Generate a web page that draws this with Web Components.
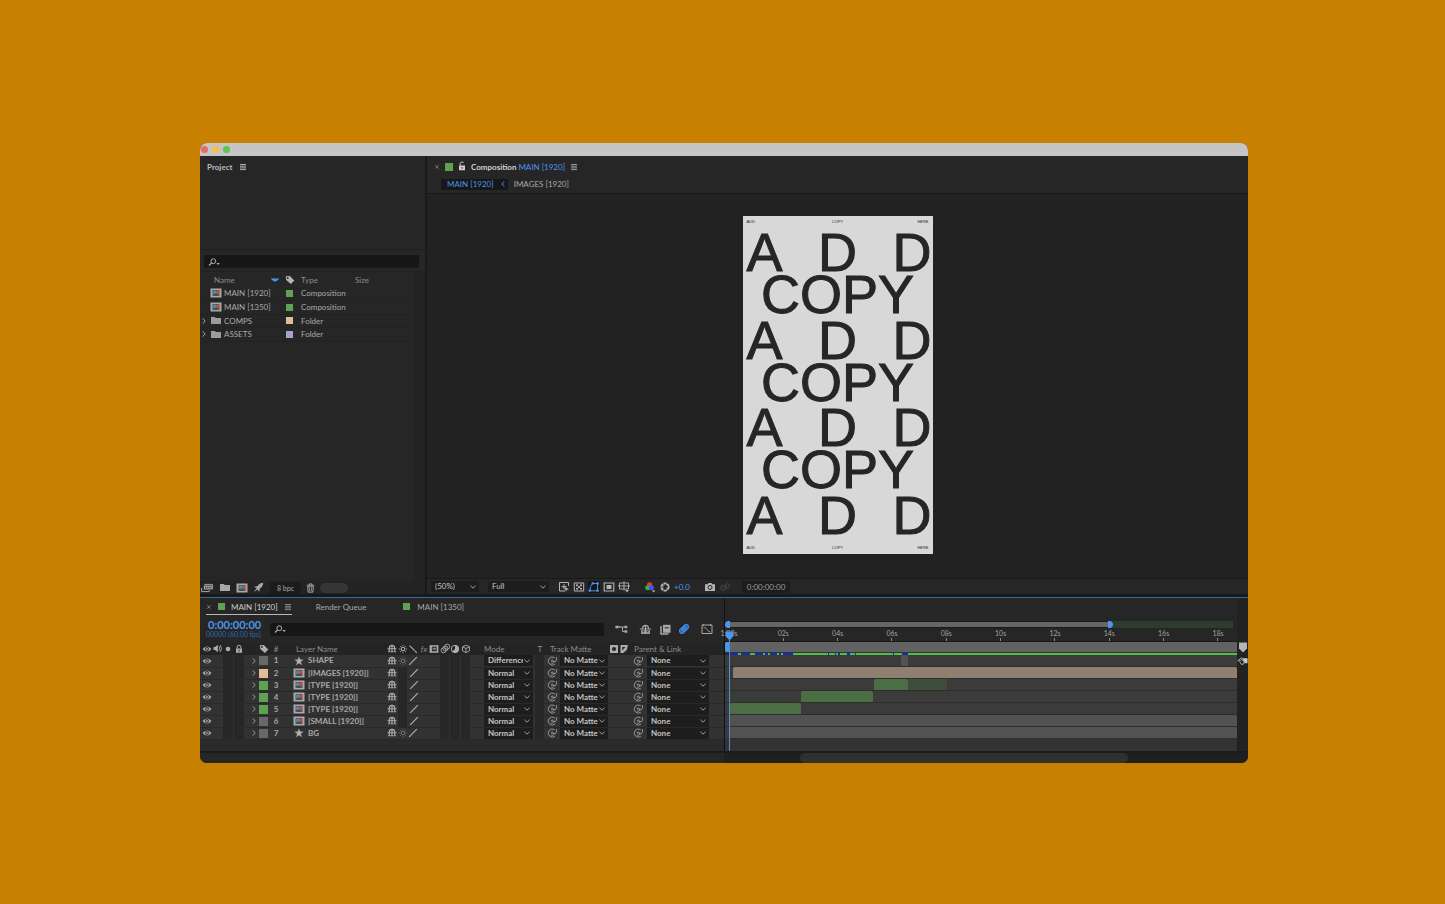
<!DOCTYPE html>
<html lang="en">
<head>
<meta charset="utf-8">
<title>MAIN [1920]</title>
<style>
  * { box-sizing: border-box; }
  body {
    margin: 0;
    min-height: 100vh;
    padding: 143px 197px 141px 200px;
    display: flex;
    background: #c88000;
    font: 8px/12px Lato, "Open Sans", sans-serif;
    color: #a8a8a8;
    --panel: #262626;
    --line: #191919;
    --field: #171717;
    --blue: #4b96ee;
    --green: #5fa252;
    --peach: #e3bd98;
    --violet: #a6a5c9;
    --gray: #686868;
  }
</style>
</head>
<body>
<app-window>
  <project-panel slot="left"></project-panel>
  <comp-panel slot="right"></comp-panel>
  <timeline-panel slot="bottom"></timeline-panel>
</app-window>

<script>
// each entry: [viewBox width, viewBox height, markup]
const ICONS = {
  menu: [8, 8, `<path d="M1 1.5h6M1 3.2h6M1 4.9h6M1 6.6h6" stroke="currentColor" stroke-width=".9"/>`],
  close: [6, 6, `<path d="M1.2 1.2l3.4 3.4M4.6 1.2L1.2 4.6" stroke="currentColor" stroke-width=".8"/>`],
  unlock: [8, 10, `<path d="M1 4.5h6v4.7H1z" fill="currentColor"/><path d="M2.2 4.5V2.6a1.8 1.8 0 0 1 3.4-.6" fill="none" stroke="currentColor"/><path d="M4 6v1.8" stroke="#262626"/>`],
  lock: [8, 10, `<path d="M1 4.5h6v4.3H1z" fill="currentColor"/><path d="M2.2 4.5V3a1.8 1.8 0 0 1 3.6 0v1.5" fill="none" stroke="currentColor"/><path d="M4 5.7v1.8" stroke="#262626"/>`],
  search: [12, 8, `<circle cx="5.3" cy="3.2" r="2.4" fill="none" stroke="currentColor"/><path d="M3.6 4.9L1 7.5" stroke="currentColor" stroke-width="1.2"/><path d="M8.4 5h3.4L10.1 6.9z" fill="currentColor"/>`],
  tag: [10, 10, `<path d="M.8 1.2L4.8.9 9.3 5.4 5.9 9.1 1.2 5z" fill="currentColor"/><circle cx="2.8" cy="3" r=".9" fill="#262626"/>`],
  comp: [12, 10, `<path d="M.5.5h11v9H.5z" fill="#a9a9a9"/><path d="M2.500 2h7v6h-7z" fill="#55555a"/><circle cx="4.800" cy="4.200" r="1.800" fill="#4a86d8"/><circle cx="7.700" cy="4.300" r="1.700" fill="#d8483c"/><path d="M4.500 5.800h2.800V8H4.500z" fill="#2f5f3a"/>`],
  folder: [12, 9, `<path d="M1 1h3.8l1 1.1H11V8H1z" fill="currentColor"/>`],
  chev: [6, 8, `<path d="M1.7 1.4L4.2 4 1.7 6.6" fill="none" stroke="currentColor"/>`],
  back: [6, 8, `<path d="M4.2 1.4L1.9 4l2.3 2.6" fill="none" stroke="currentColor"/>`],
  down: [8, 6, `<path d="M1.4 1.7L4 4.2l2.6-2.5" fill="none" stroke="currentColor"/>`],
  sort: [10, 6, `<path d="M.6 1.4h8.8L7.4 3.4Q5 5.4 2.6 3.4z" fill="currentColor"/>`],
  interpret: [13, 10, `<path d="M3.4 1.4h8.2v4.8" fill="none" stroke="currentColor" stroke-width=".9"/><path d="M2.8 2.6h8v4h-8z" fill="currentColor"/><path d="M4 3.8h1.2v1.6H4zM6.2 3.8h1.2v1.6H6.2zM8.4 3.8h1.2v1.6H8.4z" fill="#333"/><path d="M.6 5v3.6h7.6V7.2" fill="none" stroke="currentColor"/>`],
  rocket: [11, 11, `<path d="M10.2.8Q6.4 1 4.3 4.2L1 4.8l2.600 1.4L.8 9.9l3.9-2.5L6.2 10l.6-3.3Q10 4.600 10.200.8z" fill="currentColor"/>`],
  trash: [9, 10, `<path d="M.8 2.2h7.4M3.2 2V.9h2.600V2" fill="none" stroke="currentColor" stroke-width=".9"/><path d="M1.7 3.2h5.600l-.4 5.9H2.1z" fill="none" stroke="currentColor"/><path d="M3.600 4.200v3.800M5.400 4.200v3.800" stroke="currentColor" stroke-width=".8"/>`],
  roi: [12, 12, `<path d="M10.500 5V1.500h-9v8.500H7" fill="none" stroke="currentColor"/><path d="M6 3.200v5M3.500 5.700h5" stroke="currentColor"/><path d="M6.500 5.700l4.500 2.500-2.200.6-1 2z" fill="currentColor"/>`],
  checker: [12, 12, `<path d="M1.300 2h9.400v8H1.300z" fill="none" stroke="currentColor"/><path d="M3 3.500h2v1.700H3zM7 3.500h2v1.700H7zM5 5.200h2v1.700H5zM3 6.900h2v1.700H3zM7 6.900h2v1.700H7z" fill="currentColor"/>`],
  mask: [12, 12, `<path d="M1.800 9.800Q2 4.600 4.600 2.500h5v7.300z" fill="none" stroke="currentColor"/><path d="M.6 8.600h2.200v2.200H.6zM3.600 1.300h2.200v2.200H3.600zM8.600 1.300h2.200v2.200H8.600zM8.600 8.600h2.200v2.200H8.600z" fill="currentColor"/>`],
  safe: [12, 12, `<path d="M1.200 2h9.600v8H1.200z" fill="none" stroke="currentColor" stroke-width="1.100"/><path d="M3.500 4h5v4h-5z" fill="currentColor"/>`],
  guides: [12, 12, `<path d="M1.500 2h9v6h-9zM0 5h12M6 .5v9" fill="none" stroke="currentColor" stroke-width=".9"/><path d="M7 9h4L9 11.300z" fill="currentColor"/>`],
  rgb: [12, 12, `<circle cx="5.600" cy="3.800" r="2.600" fill="#e8392c"/><circle cx="3.700" cy="6.700" r="2.500" fill="#38b13f"/><circle cx="7.400" cy="6.800" r="2.500" fill="#4058ee"/><path d="M7.800 9.400h3.600l-1.800 2z" fill="#bbb"/>`],
  aperture: [12, 12, `<circle cx="6" cy="6" r="3.700" fill="none" stroke="currentColor" stroke-width="1.800" stroke-dasharray="3.200 .67"/><path d="M6 1.800l2.600 3M10.200 6L7 8M3.800 9.400L3.900 5.500M2 5l3.500-1" stroke="currentColor" stroke-width=".8"/>`],
  camera: [12, 10, `<path d="M1 2.300h2.600L4.600 1h2.800l1 1.300H11V9H1z" fill="currentColor"/><circle cx="6" cy="5.400" r="2" fill="none" stroke="#262626"/>`],
  show: [12, 10, `<circle cx="4" cy="6" r="2.300" fill="none" stroke="currentColor"/><path d="M6 3.500L8.500 1.500 11 3.700 8 6.500z" fill="none" stroke="currentColor"/>`],
  eye: [10, 8, `<path d="M.5 4Q5-1.200 9.500 4 5 9.200.5 4z" fill="currentColor"/><circle cx="5" cy="4" r="1.900" fill="#262626"/><circle cx="5" cy="4" r=".9" fill="currentColor"/>`],
  speaker: [10, 9, `<path d="M.5 3h1.600L4.800.7v7.600L2.100 6H.5z" fill="currentColor"/><path d="M6 2.400q1.300 2.100 0 4.200M7.200 1q2.600 3.500 0 7" fill="none" stroke="currentColor" stroke-width=".9"/>`],
  dot: [6, 6, `<circle cx="3" cy="3" r="2.300" fill="currentColor"/>`],
  star: [10, 10, `<path d="M5 .4l1.200 3.200 3.500.1-2.800 2.100 1 3.400L5 7.200 2.100 9.200l1-3.400L.3 3.700l3.500-.1z" fill="currentColor"/>`],
  shy: [10, 9, `<path d="M2.200 4.500a2.800 3.100 0 0 1 5.600 0M.5 4.700h9M5 1.500v6M2.300 4.700v3H1M7.700 4.700v3h1.500M3.500 7.800h3" fill="none" stroke="currentColor" stroke-width="1.100"/>`],
  sun: [10, 10, `<circle cx="5" cy="5" r="1.800" fill="none" stroke="currentColor" stroke-width="1.100"/><path d="M5 .9v1.300M5 7.800v1.300M.9 5h1.300M7.800 5h1.300M2.100 2.100l.8.8M7.100 7.100l.8.8M7.900 2.100l-.8.8M2.900 7.100l-.8.8" stroke="currentColor" stroke-width=".9"/>`],
  slash: [10, 10, `<path d="M1.200 8.800l7.600-7.600" stroke="currentColor" stroke-width="1.200"/>`],
  backslash: [10, 10, `<path d="M1.600 1.600l5 5M7 7l1.800 1.800" stroke="currentColor" stroke-width="1.200"/>`],
  film: [10, 10, `<path d="M.6 1.200h8.800v7.600H.6z" fill="currentColor"/><path d="M2.800 2.600h5v4.800h-5z" fill="#383838"/><path d="M3.800 4.800h3.200" stroke="currentColor"/>`],
  blur: [11, 11, `<g fill="none" stroke="currentColor" stroke-width=".9"><circle cx="7.300" cy="3.700" r="2.500"/><circle cx="5.400" cy="5.500" r="2.500"/><circle cx="3.500" cy="7.300" r="2.500"/></g>`],
  blurOn: [12, 12, `<path d="M6.300 1.800L2 6a2.700 2.700 0 0 0 3.900 3.900l4.300-4.200A2.700 2.700 0 0 0 6.300 1.800z" fill="#2d66b5"/><g fill="none" stroke="currentColor" stroke-width=".8"><circle cx="8.100" cy="3.900" r="2.600"/><circle cx="6.100" cy="5.900" r="2.600"/><circle cx="4" cy="7.900" r="2.600"/></g>`],
  adjust: [10, 10, `<circle cx="5" cy="5" r="3.700" fill="none" stroke="currentColor"/><path d="M2.400 7.600A3.700 3.700 0 0 0 7.600 2.400z" fill="currentColor"/><path d="M5 1.300a3.700 3.700 0 0 1 0 7.400z" fill="currentColor"/>`],
  cube: [10, 10, `<path d="M5 1.200l3.500 1.600v4L5 8.700 1.500 6.800v-4zM1.500 2.800L5 4.500l3.500-1.700M5 4.500v4" fill="none" stroke="currentColor" stroke-width=".9"/>`],
  whip: [11, 10, `<path d="M5.600 5.300a.7.700 0 1 1-.5-1.200 1.600 1.600 0 1 1-1 2.700M6.700 5.500a2 2 0 0 0 2.700-1.200V1.200M7.600 1.800A4 4 0 1 0 8 8" fill="none" stroke="currentColor" stroke-width=".8"/>`],
  matteA: [10, 10, `<path d="M1 1h8v8H1z" fill="currentColor"/><circle cx="5" cy="5" r="2.100" fill="#262626"/>`],
  matteB: [10, 10, `<path d="M1.500 1h7.500L7.800 6 4 9H1.500z" fill="currentColor"/><path d="M3.300 3h3.200L3.300 6.500z" fill="#262626"/>`],
  flow: [13, 10, `<path d="M.5 3h5M4 3h8M7.500 3v4.500H12" fill="none" stroke="currentColor"/><path d="M.5 1.800h3v2.400h-3zM9.500 1.800h2.800v2.400H9.500zM9.500 6.300h2.800v2.400H9.500z" fill="currentColor"/>`],
  shyBig: [13, 11, `<path d="M3.500 4.800a3 3.400 0 0 1 6 0M.8 5h11.400M6.500 1v9" fill="none" stroke="currentColor" stroke-width="1.200"/><path d="M2 6.200h9V10H2z" fill="currentColor" opacity=".85"/><path d="M3.800 7.200h1.400M7.800 7.200h1.400" stroke="#262626"/>`],
  blend: [12, 11, `<path d="M4 .8h7.500v8H4z" fill="currentColor"/><path d="M2 2v7.900H9.500" fill="none" stroke="currentColor" stroke-width="1.500"/><path d="M5.800 3.800h4" stroke="#262626"/>`],
  graph: [12, 12, `<path d="M1 2h10v8.500H1z" fill="none" stroke="currentColor"/><path d="M2.500 4.500q3 0 3.500 2t3.500 2.500M2.500 1v2M9.500 1v2" fill="none" stroke="currentColor" stroke-width=".8"/>`],
  marker: [10, 11, `<path d="M1 .5h8v6L5 10.500l-4-4z" fill="currentColor"/>`],
  hide: [11, 10, `<path d="M5 2.300h5.500v5H8z" fill="#ccc"/><path d="M4.800 1.500L.8 4.800h3M4 3.500l3 1v3.200L4.500 8.500 2.800 6" fill="none" stroke="currentColor"/>`]
};

class UiIcon extends HTMLElement {
  constructor() {
    super();
    this.attachShadow({ mode: "open" });
  }

  connectedCallback() {
    const [w, h, body] = ICONS[this.getAttribute("name")];
    this.shadowRoot.innerHTML = `
      <style>
        :host { display: inline-flex; flex: none; vertical-align: middle; }
        svg { display: block; }
      </style>
      <svg width="${w}" height="${h}" viewBox="0 0 ${w} ${h}" aria-hidden="true">${body}</svg>`;
  }
}
customElements.define("ui-icon", UiIcon);

class UiSelect extends HTMLElement {
  constructor() {
    super();
    this.attachShadow({ mode: "open" });
  }

  connectedCallback() {
    this.shadowRoot.innerHTML = `
      <style>
        :host { display: grid; align-items: center; min-width: 0; background: #1d1d1d; color: #c4c4c4; }
        select, ui-icon { grid-area: 1 / 1; }
        select {
          appearance: none; width: 100%; min-width: 0; height: 11px; border: 0; margin: 0;
          padding: 0 10px 0 4px; background: none; color: inherit; font: inherit; line-height: 11px;
        }
        ui-icon { justify-self: end; margin-right: 2px; pointer-events: none; color: #a0a0a0; }
      </style>
      <select aria-label="${this.getAttribute("label")}"><option>${this.getAttribute("value")}</option></select>
      <ui-icon name="down"></ui-icon>`;
  }
}
customElements.define("ui-select", UiSelect);

class SearchField extends HTMLElement {
  constructor() {
    super();
    this.attachShadow({ mode: "open" });
    this.shadowRoot.innerHTML = `
      <style>
        :host { display: flex; align-items: center; height: 13px; padding-left: 4px; background: var(--field); border-radius: 2px; color: #b0b0b0; }
        input { flex: 1; min-width: 0; height: 11px; border: 0; padding: 0 4px; background: none; color: inherit; font: inherit; outline: none; }
      </style>
      <ui-icon name="search"></ui-icon>
      <input type="text" aria-label="Search">`;
  }
}
customElements.define("search-field", SearchField);

class AppWindow extends HTMLElement {
  constructor() {
    super();
    this.attachShadow({ mode: "open" });
    this.shadowRoot.innerHTML = `
      <style>
        :host { display: flex; flex-direction: column; flex: 1; min-width: 0; border-radius: 7px; overflow: hidden; background: var(--line); }
        header { display: flex; align-items: center; gap: 4px; height: 13px; padding-left: 1px; background: #c5c5c5; }
        header i { width: 7px; height: 7px; border-radius: 50%; background: #ec6a5f; }
        header i:nth-child(2) { background: #f4bf50; }
        header i:nth-child(3) { background: #5fc454; }
        .top { flex: 1; display: flex; gap: 2px; min-height: 0; padding-bottom: 3px; }
        slot[name=left]::slotted(*) { flex: 0 0 225px; }
        slot[name=right]::slotted(*) { flex: 1; min-width: 0; }
      </style>
      <header><i></i><i></i><i></i></header>
      <div class="top"><slot name="left"></slot><slot name="right"></slot></div>
      <slot name="bottom"></slot>`;
  }
}
customElements.define("app-window", AppWindow);

const ITEMS = [
  { name: "MAIN [1920]", icon: "comp", color: "green", type: "Composition" },
  { name: "MAIN [1350]", icon: "comp", color: "green", type: "Composition" },
  { name: "COMPS", icon: "folder", color: "peach", type: "Folder" },
  { name: "ASSETS", icon: "folder", color: "violet", type: "Folder" }
];

class ProjectPanel extends HTMLElement {
  constructor() {
    super();
    this.attachShadow({ mode: "open" });
    this.shadowRoot.innerHTML = `
      <style>
        * { box-sizing: border-box; }
        :host { display: flex; flex-direction: column; background: var(--panel); }
        h2 { display: flex; align-items: center; gap: 6px; height: 22px; margin: 0; padding-left: 7px; font-size: 8px; font-weight: 700; color: #bdbdbd; }
        .preview { height: 72px; border-bottom: 1px solid #202020; }
        search-field { margin: 5px 6px 3px 4px; }
        .list { flex: 1; border-right: 11px solid #232323; border-top: 1px solid #202020; }
        table { width: 100%; border-collapse: collapse; table-layout: fixed; }
        th { height: 15px; padding: 0; font-weight: 400; text-align: left; color: #8c8c8c; }
        td { height: 13px; padding: 0; white-space: nowrap; border-bottom: 1px solid #222; }
        tbody tr:nth-child(even) td { height: 14px; }
        td div, th div { display: flex; align-items: center; height: 12px; }
        th.name div { justify-content: space-between; padding: 0 5px 0 14px; }
        td.name div { gap: 2px; padding-left: 10px; }
        td.name div.twirl { gap: 0; padding-left: 1px; }
        td.name div.twirl ui-icon + ui-icon { margin: 0 2px 0 3px; color: #9c9c9c; }
        th ui-icon[name=sort] { color: var(--blue); }
        th ui-icon[name=tag] { color: #b5b5b5; }
        .dot { display: block; width: 7px; height: 7px; margin-left: 1px; }
        footer { display: flex; align-items: center; height: 13px; padding-left: 1px; gap: 5px; color: #a8a8a8; background: #232323; }
        footer button { display: flex; border: 0; padding: 0; background: none; color: inherit; font: inherit; font-size: 7px; }
        footer .bpc { padding: 0 7px; margin-left: 1px; background: #1c1c1c; }
        footer .thumb { width: 28px; height: 10px; border-radius: 5px; background: #363636; }
      </style>
      <h2>Project <ui-icon name="menu"></ui-icon></h2>
      <div class="preview"></div>
      <search-field></search-field>
      <div class="list">
        <table>
          <colgroup><col style="width: 85px"><col style="width: 16px"><col style="width: 54px"><col></colgroup>
          <thead><tr>
            <th class="name"><div>Name <ui-icon name="sort"></ui-icon></div></th>
            <th><ui-icon name="tag"></ui-icon></th><th>Type</th><th>Size</th>
          </tr></thead>
          <tbody>${ITEMS.map((item) => `
            <tr>
              <td class="name"><div class="${item.icon === "folder" ? "twirl" : ""}">
                ${item.icon === "folder" ? `<ui-icon name="chev"></ui-icon>` : ""}<ui-icon name="${item.icon}"></ui-icon><span>${item.name}</span>
              </div></td>
              <td><i class="dot" style="background: var(--${item.color})"></i></td>
              <td>${item.type}</td><td></td>
            </tr>`).join("")}
          </tbody>
        </table>
      </div>
      <footer>
        <button aria-label="Interpret footage"><ui-icon name="interpret"></ui-icon></button>
        <button aria-label="New folder"><ui-icon name="folder"></ui-icon></button>
        <button aria-label="New composition"><ui-icon name="comp"></ui-icon></button>
        <button aria-label="Project settings"><ui-icon name="rocket"></ui-icon></button>
        <button class="bpc">8 bpc</button>
        <button aria-label="Delete"><ui-icon name="trash"></ui-icon></button>
        <span class="thumb"></span>
      </footer>`;
  }
}
customElements.define("project-panel", ProjectPanel);

class PosterArt extends HTMLElement {
  constructor() {
    super();
    this.attachShadow({ mode: "open" });
    const small = `<div class="small"><span>ADD</span><span>COPY</span><span>HERE</span></div>`;
    const add = `<div class="add"><span>A</span><span>D</span><span>D</span></div>`;
    const copy = `<div class="copy">COPY</div>`;
    this.shadowRoot.innerHTML = `
      <style>
        * { box-sizing: border-box; }
        :host { box-sizing: border-box; display: flex; flex-direction: column; width: 190px; aspect-ratio: 190 / 338; padding: 3px 4px; background: #d8d8d8; color: #262626; font-family: "Liberation Sans", Arial, sans-serif; }
        .small { display: grid; grid-template-columns: 1fr auto 1fr; font-size: 4px; line-height: 6px; }
        .small span:last-child { text-align: right; }
        .big { flex: 1; display: flex; flex-direction: column; justify-content: space-between; margin: 6px 0 9px; font-size: 54px; line-height: 42px; -webkit-text-stroke: 1px #262626; }
        .add { display: flex; justify-content: space-between; margin-right: -3px; }
        .copy { display: flex; justify-content: center; }
      </style>
      ${small}
      <div class="big">
        <div>${add}${copy}</div>
        <div>${add}${copy}</div>
        <div>${add}${copy}</div>
        ${add}
      </div>
      ${small}`;
  }
}
customElements.define("poster-art", PosterArt);

class CompPanel extends HTMLElement {
  constructor() {
    super();
    this.attachShadow({ mode: "open" });
    this.shadowRoot.innerHTML = `
      <style>
        * { box-sizing: border-box; }
        :host { display: flex; flex-direction: column; background: var(--panel); }
        .tab { display: flex; align-items: center; height: 22px; margin: 0; padding-left: 7px; gap: 5px; font-size: 8px; font-weight: 700; color: #d0d0d0; }
        .tab b { font-weight: 400; color: var(--blue); }
        .tab ui-icon[name=close] { color: #8a8a8a; }
        .tab ui-icon[name=menu] { color: #a4a4a4; }
        .tab ui-icon[name=unlock] { margin-top: -2px; }
        .sq { width: 8px; height: 8px; background: var(--green); }
        nav { display: flex; align-items: center; height: 16px; padding: 1px 0 4px 14px; border-bottom: 1px solid var(--line); gap: 6px; }
        nav a { display: flex; align-items: center; height: 11px; color: inherit; text-decoration: none; }
        nav a.on { padding: 0 2px 0 6px; gap: 6px; background: var(--field); color: var(--blue); }
        .stage { flex: 1; min-height: 0; display: flex; align-items: center; justify-content: center; padding-bottom: 2px; background: #222; }
        footer { display: flex; align-items: center; height: 16px; padding-left: 4px; gap: 3px; border-top: 1px solid var(--line); color: #b4b4b4; }
        footer ui-select { width: 48px; }
        footer ui-select.res { width: 61px; margin: 0 6px 0 6px; }
        footer button { display: flex; border: 0; padding: 0; background: none; color: inherit; font: inherit; }
        footer .on { color: var(--blue); background: #151515; }
        footer .gap { margin-left: 11px; }
        footer .dim { color: #4a4a4a; }
        footer .val { color: var(--blue); }
        footer .time { margin-left: 8px; padding: 0 5px; background: #1d1d1d; color: #9c9c9c; }
      </style>
      <h2 class="tab"><ui-icon name="close"></ui-icon><i class="sq"></i><ui-icon name="unlock"></ui-icon>
        <span>Composition <b>MAIN [1920]</b></span><ui-icon name="menu"></ui-icon></h2>
      <nav>
        <a class="on" href="#main">MAIN [1920] <ui-icon name="back"></ui-icon></a>
        <a href="#images">IMAGES [1920]</a>
      </nav>
      <div class="stage"><poster-art></poster-art></div>
      <footer>
        <ui-select label="Magnification" value="(50%)"></ui-select>
        <ui-select class="res" label="Resolution" value="Full"></ui-select>
        <button aria-label="Region of interest"><ui-icon name="roi"></ui-icon></button>
        <button aria-label="Transparency grid"><ui-icon name="checker"></ui-icon></button>
        <button class="on" aria-label="Mask visibility"><ui-icon name="mask"></ui-icon></button>
        <button aria-label="Safe zones"><ui-icon name="safe"></ui-icon></button>
        <button aria-label="Guides"><ui-icon name="guides"></ui-icon></button>
        <button class="gap" aria-label="Channels"><ui-icon name="rgb"></ui-icon></button>
        <button aria-label="Reset exposure"><ui-icon name="aperture"></ui-icon></button>
        <button class="val">+0.0</button>
        <button class="gap" aria-label="Take snapshot"><ui-icon name="camera"></ui-icon></button>
        <button class="dim" aria-label="Show snapshot"><ui-icon name="show"></ui-icon></button>
        <button class="time">0:00:00:00</button>
      </footer>`;
  }
}
customElements.define("comp-panel", CompPanel);

// bars are [start, end, colour] in seconds
const LAYERS = [
  { name: "SHAPE", icon: "star", color: "gray", mode: "Difference", bars: [[6.32, 6.56, "#525252"]] },
  { name: "[IMAGES [1920]]", icon: "comp", color: "peach", mode: "Normal", bars: [[0.13, 18.66, "#8f7f70"]] },
  { name: "[TYPE [1920]]", icon: "comp", color: "green", mode: "Normal", bars: [[5.32, 6.56, "#4c6e45"], [6.56, 8.02, "#3e4e3a"]] },
  { name: "[TYPE [1920]]", icon: "comp", color: "green", mode: "Normal", bars: [[2.65, 5.3, "#4c6e45"]] },
  { name: "[TYPE [1920]]", icon: "comp", color: "green", mode: "Normal", bars: [[0.02, 2.63, "#4c6e45"]] },
  { name: "[SMALL [1920]]", icon: "comp", color: "gray", mode: "Normal", bars: [[0, 18.66, "#525252"]] },
  { name: "BG", icon: "star", color: "gray", mode: "Normal", bars: [[0, 18.66, "#525252"]] }
];

class LayerTable extends HTMLElement {
  constructor() {
    super();
    this.attachShadow({ mode: "open" });
    // 0 takes the space that is left (the name column)
    const widths = [13, 10, 10, 11, 13, 13, 12, 0, 11, 10, 11, 10, 11, 10, 11, 10, 13, 49, 2, 10, 1, 14, 48, 22, 17, 62, 15];
    this.shadowRoot.innerHTML = `
      <style>
        * { box-sizing: border-box; }
        :host { display: block; }
        table { width: 100%; border-collapse: collapse; table-layout: fixed; }
        th, td { height: 12px; padding: 0; line-height: 11px; text-align: center; white-space: nowrap; }
        th { font-weight: 400; color: #8c8c8c; background: #242424; }
        th ui-icon, td ui-icon { margin-top: -1px; color: #adadad; }
        th.l { text-align: left; }
        td { background: #323232; border-bottom: 1px solid #292929; }
        td.box { background: #272727; border-right: 1px solid #323232; }
        td ui-icon[name=chev] { color: #999; }
        td.dim ui-icon { color: #6c6c6c; }
        td.name { text-align: left; padding-left: 11px; font-weight: 700; }
        td.num { font-weight: 700; }
        td.name div { display: flex; align-items: center; gap: 3px; height: 11px; }
        td.name ui-icon { margin-top: 0; width: 12px; justify-content: center; }
        .sw { display: block; width: 9px; height: 9px; margin: 0 auto; }
        ui-select { text-align: left; font-weight: 700; }
      </style>
      <table>
        <colgroup>${widths.map((w) => w ? `<col style="width: ${w}px">` : `<col>`).join("")}</colgroup>
        <thead><tr>
          ${["eye", "speaker", "dot", "lock"].map((n) => `<th><ui-icon name="${n}"></ui-icon></th>`).join("")}
          <th></th><th><ui-icon name="tag"></ui-icon></th><th>#</th>
          <th class="l" style="padding-left: 14px">Layer Name</th>
          ${["shy", "sun", "backslash"].map((n) => `<th><ui-icon name="${n}"></ui-icon></th>`).join("")}
          <th><i>fx</i></th>
          ${["film", "blur", "adjust", "cube"].map((n) => `<th><ui-icon name="${n}"></ui-icon></th>`).join("")}
          <th></th><th class="l">Mode</th><th></th><th>T</th><th></th>
          <th class="l" colspan="2" style="padding-left: 4px">Track Matte</th>
          <th><ui-icon name="matteA"></ui-icon><ui-icon name="matteB"></ui-icon></th>
          <th class="l" colspan="3" style="padding-left: 4px">Parent &amp; Link</th>
        </tr></thead>
        <tbody>${LAYERS.map((l, i) => `
          <tr>
            <td><ui-icon name="eye"></ui-icon></td><td></td><td class="box"></td><td class="box"></td>
            <td style="text-align: right"><ui-icon name="chev"></ui-icon></td>
            <td><i class="sw" style="background: var(--${l.color})"></i></td>
            <td class="num">${i + 1}</td>
            <td class="name"><div><ui-icon name="${l.icon}"></ui-icon><span>${l.name}</span></div></td>
            <td><ui-icon name="shy"></ui-icon></td>
            ${l.icon === "star" ? `<td class="dim"><ui-icon name="sun"></ui-icon></td>` : `<td class="box"></td>`}
            <td><ui-icon name="slash"></ui-icon></td>
            <td></td><td></td><td class="box"></td><td class="box"></td><td class="box"></td><td></td>
            <td><ui-select label="Mode" value="${l.mode}"></ui-select></td>
            <td></td><td class="box"></td><td></td>
            <td><ui-icon name="whip"></ui-icon></td>
            <td><ui-select label="Track Matte" value="No Matte"></ui-select></td>
            <td></td>
            <td><ui-icon name="whip"></ui-icon></td>
            <td><ui-select label="Parent" value="None"></ui-select></td><td></td>
          </tr>`).join("")}
        </tbody>
      </table>`;
  }
}
customElements.define("layer-table", LayerTable);

class TimeTracks extends HTMLElement {
  constructor() {
    super();
    this.attachShadow({ mode: "open" });
    const span = 18.66;
    const pct = (s) => (s / span) * 100 + "%";
    const cache = [[0, 9], [12, 9], [26, 8], [36, 3], [41, 7], [50, 2], [54, 10], [99, 1], [106, 1], [109, 2], [118, 3], [126, 1], [164, 1], [173, 6]];
    const track = (bars) => {
      let at = 0;
      return bars.map(([from, to, color]) => {
        const html = `<i style="margin-left: ${pct(from - at)}; width: ${pct(to - from)}; background: ${color}"></i>`;
        at = to;
        return html;
      }).join("");
    };
    this.shadowRoot.innerHTML = `
      <style>
        * { box-sizing: border-box; }
        :host { display: flex; min-width: 0; margin-top: -17px; background: #262626; }
        .area { flex: 1; min-width: 0; display: flex; flex-direction: column; padding-top: 23px; position: relative; border-left: 1px solid #111; }
        .nav { display: flex; height: 7px; margin-right: 4px; }
        .nav i { border-radius: 4px 0 0 4px; width: 5px; background: var(--blue); }
        .nav i.r { border-radius: 0 4px 4px 0; }
        .nav .range { flex: 379; background: #666; border: 1px solid #1a1a1a; border-width: 1px 0; }
        .nav .rest { flex: 120; background: #2f3b2e; }
        .ruler { display: flex; justify-content: space-between; height: 13px; margin: 0 19px 0 4px; font-size: 7px; line-height: 10px; color: #a0a0a0; }
        .ruler span { width: 0; display: flex; flex-direction: column; align-items: center; white-space: nowrap; }
        .ruler span::after { content: ""; width: 1px; height: 3px; background: #888; }
        .work { display: flex; height: 12px; background: #626262; border-top: 1px solid #1a1a1a; border-bottom: 1px solid #333; }
        .work i { width: 4px; background: var(--blue); border-radius: 3px 0 0 3px; }
        .cache { display: block; width: calc(100% - 4px); height: 2px; margin: 0 0 0 4px; background: #4cbf45; }
        .rows { flex: 1; background: #333; }
        .row { display: flex; height: 12px; padding-left: 4px; background: #3b3b3b; border-bottom: 1px solid #2e2e2e; }
        .row i { height: 11px; border-radius: 2px 2px 0 0; }
        /* playhead runs over ruler and tracks */
        .head { position: absolute; left: 0; top: 33px; bottom: 0; width: 9px; display: flex; flex-direction: column; align-items: center; }
        .head::after { content: ""; flex: 1; width: 1px; background: #4d8fd6; }
        .side { width: 11px; display: flex; flex-direction: column; align-items: center; gap: 3px; padding-top: 44px; background: #222; color: #b5b5b5; }
      </style>
      <div class="area">
        <div class="nav"><i></i><div class="range"></div><i class="r"></i><div class="rest"></div></div>
        <div class="ruler">${["1:00s", "02s", "04s", "06s", "08s", "10s", "12s", "14s", "16s", "18s"].map((t) => `<span>${t}</span>`).join("")}</div>
        <div class="work"><i></i></div>
        <svg class="cache" viewBox="0 0 508 2" preserveAspectRatio="none" aria-hidden="true">
          ${cache.map(([x, w]) => `<rect x="${x}" width="${w}" height="2" fill="#1a28b8"/>`).join("")}
        </svg>
        <div class="rows">${LAYERS.map((l) => `<div class="row">${track(l.bars)}</div>`).join("")}</div>
        <div class="head"><svg width="9" height="10" viewBox="0 0 9 10" aria-hidden="true"><path d="M.5.5h8v4.500l-4 4.500-4-4.500z" fill="#4b96ee"/></svg></div>
      </div>
      <div class="side"><ui-icon name="marker"></ui-icon><ui-icon name="hide"></ui-icon></div>`;
  }
}
customElements.define("time-tracks", TimeTracks);

class TimelinePanel extends HTMLElement {
  constructor() {
    super();
    this.attachShadow({ mode: "open" });
    this.shadowRoot.innerHTML = `
      <style>
        * { box-sizing: border-box; }
        :host { display: flex; flex-direction: column; background: var(--panel); border-top: 1px solid #38679c; }
        .tabs { display: flex; height: 17px; padding-left: 6px; }
        .tabs a { display: flex; align-items: center; gap: 7px; color: inherit; text-decoration: none; }
        .tabs a.on { padding: 1px 0 0; gap: 6px; color: #cfcfcf; border-bottom: 1px solid #b8b8b8; }
        .tabs ui-icon { color: #8f8f8f; }
        .sq { width: 7px; height: 7px; background: var(--green); }
        .body { display: grid; grid-template-columns: 1fr 1fr; height: 136px; }
        .left { display: flex; flex-direction: column; min-width: 0; background: #2b2b2b; }
        .tools { display: flex; align-items: center; height: 28px; padding: 0 11px 0 6px; background: var(--panel); color: #a8a8a8; }
        .clock { width: 64px; color: var(--blue); }
        .clock b { display: block; padding-left: 2px; font-size: 11px; line-height: 11px; }
        .clock small { display: block; font-size: 7px; line-height: 9px; color: #2e69a8; }
        .tools search-field { flex: 1; }
        .tools button { display: flex; border: 0; padding: 0; margin-left: 7px; background: none; color: inherit; }
        .tools .wide { margin-left: 11px; }
        .tools .blur { color: var(--blue); }
        .scroll { display: grid; grid-template-columns: 1fr 1fr; height: 12px; border-top: 2px solid #1b1b1b; }
        .rail { grid-column: 2; display: grid; grid-template-columns: 76fr 328fr 120fr; background: #1f1f1f; }
        .rail i { grid-column: 2; border-radius: 5px; background: #303030; }
      </style>
      <div class="tabs">
        <a class="on" href="#main"><ui-icon name="close"></ui-icon><i class="sq"></i><span>MAIN [1920]</span><ui-icon name="menu"></ui-icon></a>
        <a href="#queue" style="margin-left: 24px">Render Queue</a>
        <a href="#main1350" style="margin-left: 37px"><i class="sq"></i>MAIN [1350]</a>
      </div>
      <div class="body">
        <div class="left">
          <div class="tools">
            <div class="clock"><b>0:00:00:00</b><small>00000 (60.00 fps)</small></div>
            <search-field></search-field>
            <button class="wide" aria-label="Flowchart"><ui-icon name="flow"></ui-icon></button>
            <button class="wide" aria-label="Hide shy layers"><ui-icon name="shyBig"></ui-icon></button>
            <button aria-label="Frame blending"><ui-icon name="blend"></ui-icon></button>
            <button class="blur" aria-label="Motion blur"><ui-icon name="blurOn"></ui-icon></button>
            <button class="wide" aria-label="Graph editor"><ui-icon name="graph"></ui-icon></button>
          </div>
          <layer-table></layer-table>
        </div>
        <time-tracks></time-tracks>
      </div>
      <div class="scroll"><div class="rail"><i></i></div></div>`;
  }
}
customElements.define("timeline-panel", TimelinePanel);
</script>
</body>
</html>
